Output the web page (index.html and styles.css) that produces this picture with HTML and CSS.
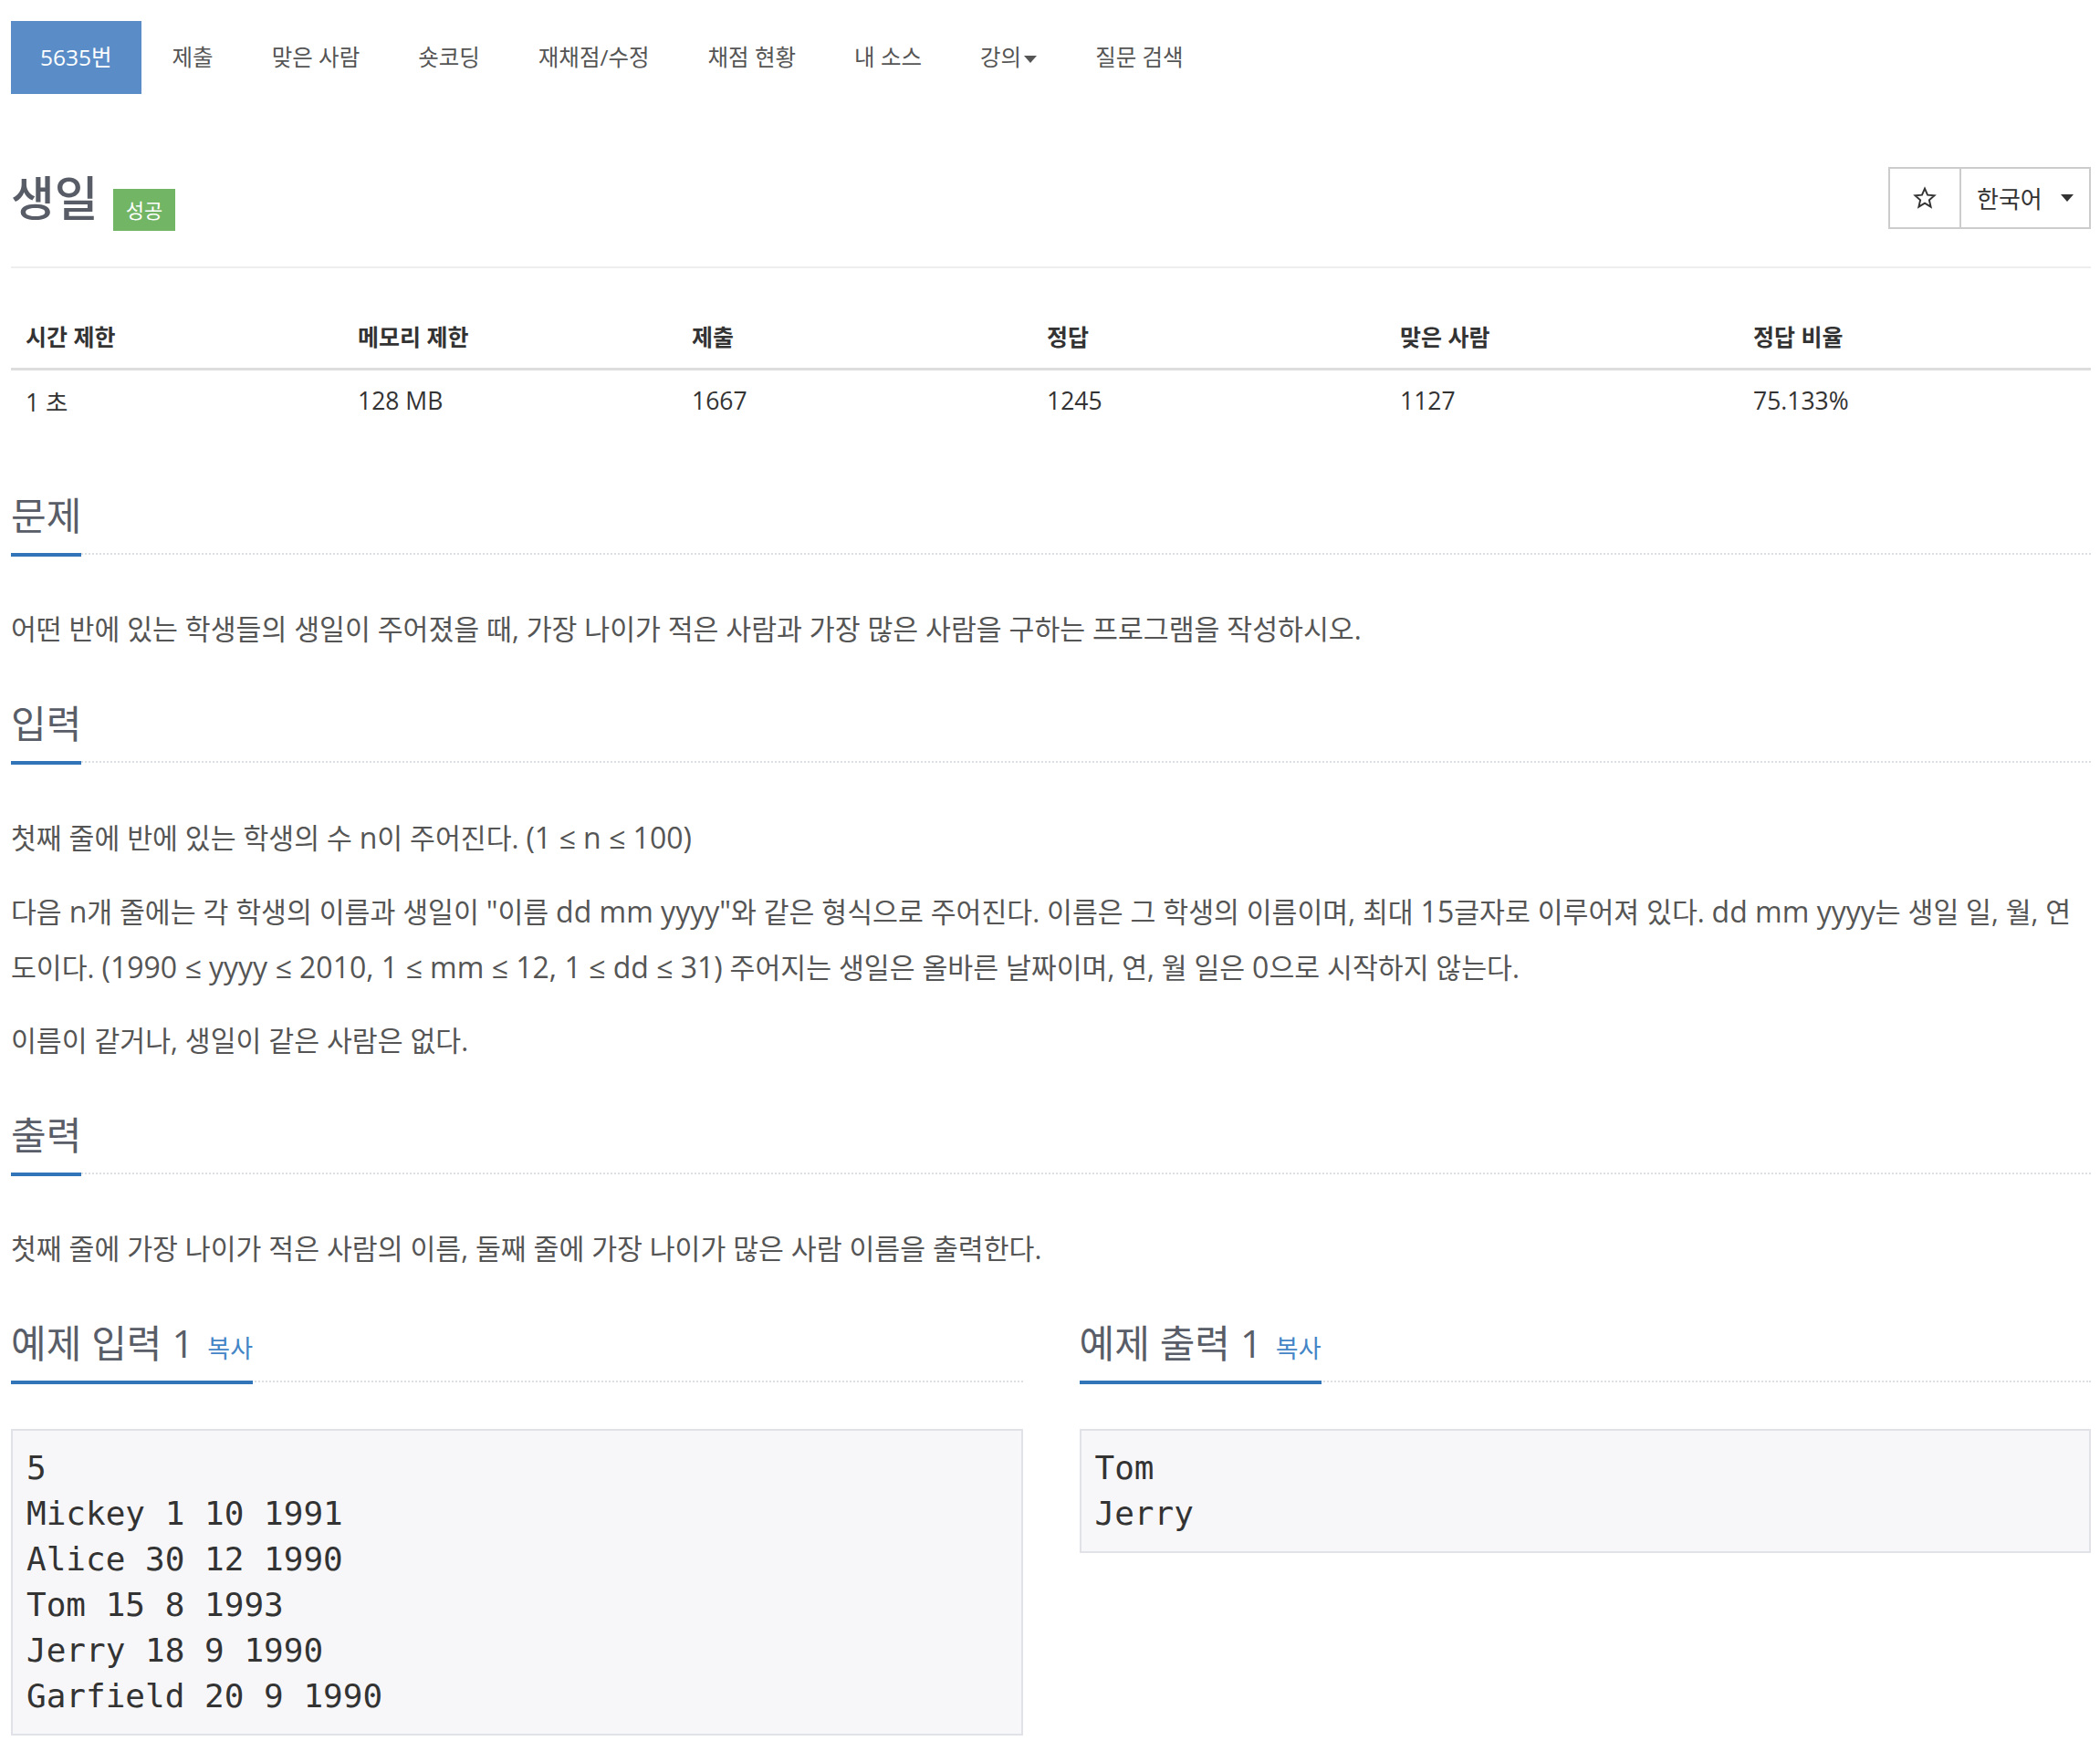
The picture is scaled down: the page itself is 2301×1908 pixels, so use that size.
FILE: index.html
```
<!DOCTYPE html>
<html lang="ko">
<head>
<meta charset="utf-8">
<title>생일</title>
<link rel="stylesheet" href="styles.css">
</head>
<body>
<div class="wrap">
  <ul class="nav">
    <li class="active"><a>5635번</a></li>
    <li><a>제출</a></li>
    <li><a>맞은 사람</a></li>
    <li><a>숏코딩</a></li>
    <li><a>재채점/수정</a></li>
    <li><a>채점 현황</a></li>
    <li><a>내 소스</a></li>
    <li><a>강의<span class="caret"></span></a></li>
    <li><a>질문 검색</a></li>
  </ul>

  <div class="page-header">
    <h1 class="title"><span class="title-text">생일</span><span class="label-ac">성공</span></h1>
    <div class="btn-group">
      <div class="btn btn-star">
        <svg width="26" height="26" viewBox="0 0 24 24"><path d="M12 2.5l2.8 6.4 6.9.6-5.2 4.6 1.6 6.8L12 17.3l-6.1 3.6 1.6-6.8-5.2-4.6 6.9-.6z" fill="none" stroke="#333" stroke-width="1.8" stroke-linejoin="miter"/></svg>
      </div>
      <div class="btn btn-lang">한국어<span class="caret caret-dark"></span></div>
    </div>
  </div>

  <table class="info">
    <colgroup><col class="c1"><col class="c2"><col class="c3"><col class="c4"><col class="c5"><col></colgroup>
    <thead>
      <tr><th>시간 제한</th><th>메모리 제한</th><th>제출</th><th>정답</th><th>맞은 사람</th><th>정답 비율</th></tr>
    </thead>
    <tbody>
      <tr><td>1 초</td><td>128 MB</td><td>1667</td><td>1245</td><td>1127</td><td>75.133%</td></tr>
    </tbody>
  </table>

  <section class="sec">
    <div class="headline"><h2>문제</h2></div>
    <p>어떤 반에 있는 학생들의 생일이 주어졌을 때, 가장 나이가 적은 사람과 가장 많은 사람을 구하는 프로그램을 작성하시오.</p>
  </section>

  <section class="sec">
    <div class="headline"><h2>입력</h2></div>
    <p>첫째 줄에 반에 있는 학생의 수 <span class="lt">n</span>이 주어진다. <span class="lt">(1 ≤ n ≤ 100)</span></p>
    <p>다음 <span class="lt">n</span>개 줄에는 각 학생의 이름과 생일이 <span class="lt">"</span>이름 <span class="lt">dd mm yyyy"</span>와 같은 형식으로 주어진다. 이름은 그 학생의 이름이며, 최대 <span class="lt">15</span>글자로 이루어져 있다. <span class="lt">dd mm yyyy</span>는 생일 일, 월, 연<br>도이다. <span class="lt">(1990 ≤ yyyy ≤ 2010, 1 ≤ mm ≤ 12, 1 ≤ dd ≤ 31)</span> 주어지는 생일은 올바른 날짜이며, 연, 월 일은 <span class="lt">0</span>으로 시작하지 않는다.</p>
    <p>이름이 같거나, 생일이 같은 사람은 없다.</p>
  </section>

  <section class="sec">
    <div class="headline"><h2>출력</h2></div>
    <p>첫째 줄에 가장 나이가 적은 사람의 이름, 둘째 줄에 가장 나이가 많은 사람 이름을 출력한다.</p>
  </section>

  <div class="samples">
    <section class="sample">
      <div class="headline"><h2>예제 입력 1 <a class="copy">복사</a></h2></div>
      <pre class="sample-data">5
Mickey 1 10 1991
Alice 30 12 1990
Tom 15 8 1993
Jerry 18 9 1990
Garfield 20 9 1990</pre>
    </section>
    <section class="sample">
      <div class="headline"><h2>예제 출력 1 <a class="copy">복사</a></h2></div>
      <pre class="sample-data">Tom
Jerry</pre>
    </section>
  </div>
</div>
</body>
</html>
```

FILE: styles.css
```
html, body {
  margin: 0;
  padding: 0;
  background: #fff;
}
body {
  font-family: "Open Sans", "Noto Sans CJK KR", sans-serif;
  font-size: 28px;
  color: #555;
}
.wrap {
  padding: 0 10px 0 12px;
}

/* nav */
.nav {
  list-style: none;
  margin: 23px 0 0;
  padding: 0;
  display: flex;
  gap: 4px;
}
.nav a {
  display: block;
  height: 80px;
  line-height: 80px;
  padding: 0 30px;
  color: #555;
  font-size: 24.5px;
}
.nav .active a {
  background: #5a8cc7;
  color: #fff;
  padding: 0 32px;
}
.caret {
  display: inline-block;
  width: 0;
  height: 0;
  margin-left: 3px;
  border-top: 8px solid #555;
  border-left: 7px solid transparent;
  border-right: 7px solid transparent;
  vertical-align: middle;
}

/* header */
.page-header {
  margin-top: 80px;
  padding-bottom: 39px;
  border-bottom: 2px solid #eee;
  display: flex;
  justify-content: space-between;
  align-items: flex-start;
}
.title {
  margin: 0;
  display: flex;
  align-items: flex-start;
  font-weight: 500;
}
.title-text {
  font-size: 52px;
  line-height: 68px;
  color: #575c66;
}
.label-ac {
  margin: 24px 0 0 16px;
  height: 46px;
  line-height: 46px;
  padding: 0 14px;
  background: #72b565;
  color: #fff;
  font-size: 22px;
  font-weight: 400;
}
.btn-group {
  display: flex;
  height: 68px;
}
.btn {
  box-sizing: border-box;
  height: 68px;
  border: 2px solid #ccc;
  display: flex;
  align-items: center;
  color: #333;
  font-size: 26px;
}
.btn-star {
  width: 80px;
  justify-content: center;
}
.btn-lang {
  width: 144px;
  margin-left: -2px;
  padding-left: 17px;
}
.caret-dark {
  border-top-color: #333;
  margin-left: 20px;
}

/* table */
.info {
  width: 100%;
  border-collapse: collapse;
  table-layout: fixed;
  margin-top: 39px;
  margin-bottom: 67px;
}
.info col.c1 { width: 364px; }
.info col.c2 { width: 366px; }
.info col.c3 { width: 389px; }
.info col.c4 { width: 387px; }
.info col.c5 { width: 387px; }
.info th {
  text-align: left;
  height: 70px;
  padding: 0 16px;
  font-size: 25px;
  font-weight: 700;
  color: #333;
  border-bottom: 3px solid #ddd;
}
.info td {
  height: 66px;
  padding: 0 16px;
  font-size: 26.5px;
  color: #333;
}

/* sections */
.sec {
  margin-top: 47px;
}
.info + .sec {
  margin-top: 0;
}
.headline {
  border-bottom: 2px dotted #dcdfe4;
  margin-bottom: 52px;
}
.headline h2 {
  display: inline-block;
  margin: 0 0 -4px;
  font-size: 42px;
  line-height: 52px;
  padding-bottom: 15px;
  font-weight: 400;
  color: #585d67;
  border-bottom: 4px solid #3175b8;
}
.sec p {
  margin: 0 0 20px;
  line-height: 60px;
  font-size: 30.3px;
  color: #555;
}
.sec p .lt {
  font-size: 32px;
}
.copy {
  margin-left: 4px;
  font-size: 27px;
  line-height: 0;
  color: #4385c6;
}

/* samples */
.samples {
  margin-top: 47px;
  display: grid;
  grid-template-columns: 1fr 1fr;
  column-gap: 62px;
  align-items: start;
}
.sample .headline {
  margin-bottom: 0;
}
.sample-data {
  margin: 51px 0 0;
  padding: 16px 15px;
  border: 2px solid #e1e1e8;
  background: #f7f7f9;
  font-family: "DejaVu Sans Mono", monospace;
  font-size: 36px;
  line-height: 50px;
  color: #333;
}
```
